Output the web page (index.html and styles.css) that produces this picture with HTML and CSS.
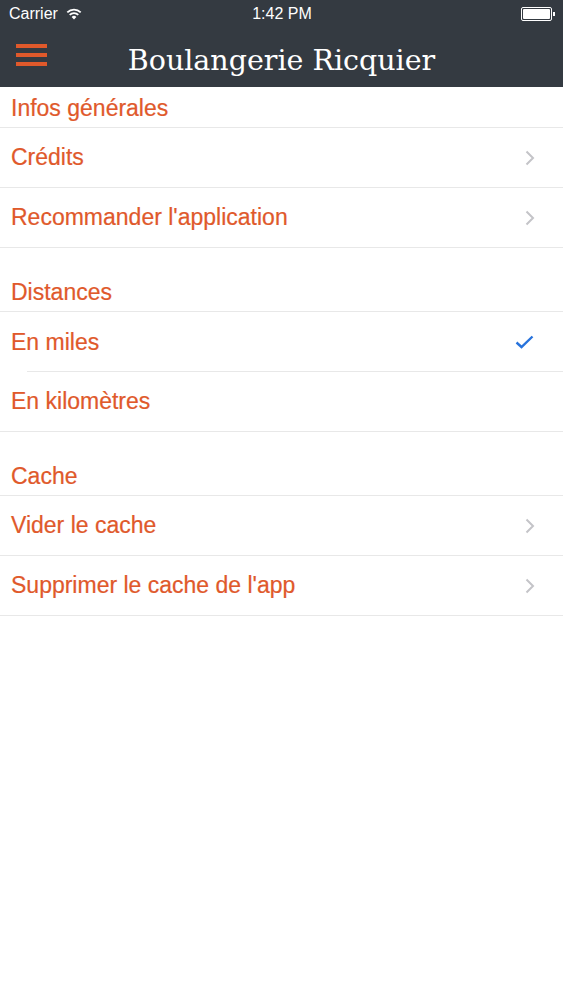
FILE: index.html
```html
<!DOCTYPE html>
<html lang="fr">
<head>
  <meta charset="UTF-8" />
  <meta name="viewport" content="width=device-width, initial-scale=1.0"/>
  <title>Boulangerie Ricquier</title>
  <link rel="stylesheet" href="styles.css">
</head>
<body>
  <div class="topbar">
    <div class="status">
      <div class="status-left">
        <span>Carrier</span>
        <svg class="wifi" width="16" height="12" viewBox="0 0 16 12">
          <path d="M8 11.5 L5.6 8.9 A3.4 3.4 0 0 1 10.4 8.9 Z" fill="#fff"/>
          <path d="M3.7 6.9 A6.1 6.1 0 0 1 12.3 6.9" stroke="#fff" stroke-width="1.8" fill="none"/>
          <path d="M1.3 4.4 A9.5 9.5 0 0 1 14.7 4.4" stroke="#fff" stroke-width="1.8" fill="none"/>
        </svg>
      </div>
      <div class="status-time">1:42 PM</div>
      <div class="status-right">
        <div class="battery"><div class="battery-fill"></div></div>
        <div class="battery-nub"></div>
      </div>
    </div>
    <div class="navbar">
      <div class="menu">
        <span></span><span></span><span></span>
      </div>
      <h1>Boulangerie Ricquier</h1>
    </div>
  </div>

  <div class="section-title first">Infos générales</div>
  <div class="row">
    <span>Crédits</span>
    <svg class="chevron" width="10" height="16" viewBox="0 0 10 16"><path d="M1.5 1.5 L8 8 L1.5 14.5" stroke="#c4c4c8" stroke-width="2" fill="none"/></svg>
  </div>
  <div class="row">
    <span>Recommander l'application</span>
    <svg class="chevron" width="10" height="16" viewBox="0 0 10 16"><path d="M1.5 1.5 L8 8 L1.5 14.5" stroke="#c4c4c8" stroke-width="2" fill="none"/></svg>
  </div>

  <div class="section-title">Distances</div>
  <div class="row inset">
    <span>En miles</span>
    <svg class="check" width="19" height="14" viewBox="0 0 19 14"><path d="M1.5 7.5 L6.5 12 L17.5 1.5" stroke="#2873dc" stroke-width="2.4" fill="none"/></svg>
  </div>
  <div class="row">
    <span>En kilomètres</span>
  </div>

  <div class="section-title">Cache</div>
  <div class="row">
    <span>Vider le cache</span>
    <svg class="chevron" width="10" height="16" viewBox="0 0 10 16"><path d="M1.5 1.5 L8 8 L1.5 14.5" stroke="#c4c4c8" stroke-width="2" fill="none"/></svg>
  </div>
  <div class="row">
    <span>Supprimer le cache de l'app</span>
    <svg class="chevron" width="10" height="16" viewBox="0 0 10 16"><path d="M1.5 1.5 L8 8 L1.5 14.5" stroke="#c4c4c8" stroke-width="2" fill="none"/></svg>
  </div>
</body>
</html>
```

FILE: styles.css
```css
body {
  margin: 0;
  padding: 0;
  background: #fff;
  font-family: "Liberation Sans", Arial, sans-serif;
  color: #e0592b;
}
.topbar {
  background: #343a41;
  color: #fff;
}
.status {
  height: 28px;
  display: flex;
  align-items: center;
  justify-content: space-between;
  padding: 0 8px 0 9px;
  font-size: 16px;
}
.status-left {
  display: flex;
  align-items: center;
  gap: 8px;
  width: 120px;
}
.status-right {
  width: 120px;
  display: flex;
  justify-content: flex-end;
  align-items: center;
}
.battery {
  width: 27px;
  height: 10px;
  border: 1px solid #fff;
  border-radius: 2px;
  padding: 1px;
}
.battery-fill {
  background: #fff;
  height: 100%;
  border-radius: 1px;
}
.battery-nub {
  width: 2px;
  height: 4px;
  background: #fff;
  margin-left: 1px;
}
.navbar {
  height: 59px;
  position: relative;
  display: flex;
  align-items: center;
  justify-content: center;
}
.menu {
  position: absolute;
  left: 16px;
  top: 16px;
  width: 31px;
  display: flex;
  flex-direction: column;
  gap: 5px;
}
.menu span {
  height: 4px;
  background: #e0592b;
}
.navbar h1 {
  margin: 6px 0 0;
  font-family: "DejaVu Serif", Georgia, serif;
  font-weight: normal;
  font-size: 28.5px;
}
.section-title {
  height: 64px;
  box-sizing: border-box;
  display: flex;
  align-items: flex-end;
  padding: 0 11px 5px;
  font-size: 23px;
  -webkit-text-stroke: 0.2px #e0592b;
  border-bottom: 1px solid #e8e8e8;
}
.section-title.first {
  height: 41px;
}
.row {
  height: 60px;
  box-sizing: border-box;
  display: flex;
  align-items: center;
  justify-content: space-between;
  padding: 0 28px 0 11px;
  font-size: 23px;
  -webkit-text-stroke: 0.2px #e0592b;
  border-bottom: 1px solid #e8e8e8;
}
.row.inset {
  border-bottom: none;
  position: relative;
}
.row.inset::after {
  content: "";
  position: absolute;
  left: 27px;
  right: 0;
  bottom: 0;
  height: 1px;
  background: #e8e8e8;
}
.check {
  margin-right: 1px;
}
```
